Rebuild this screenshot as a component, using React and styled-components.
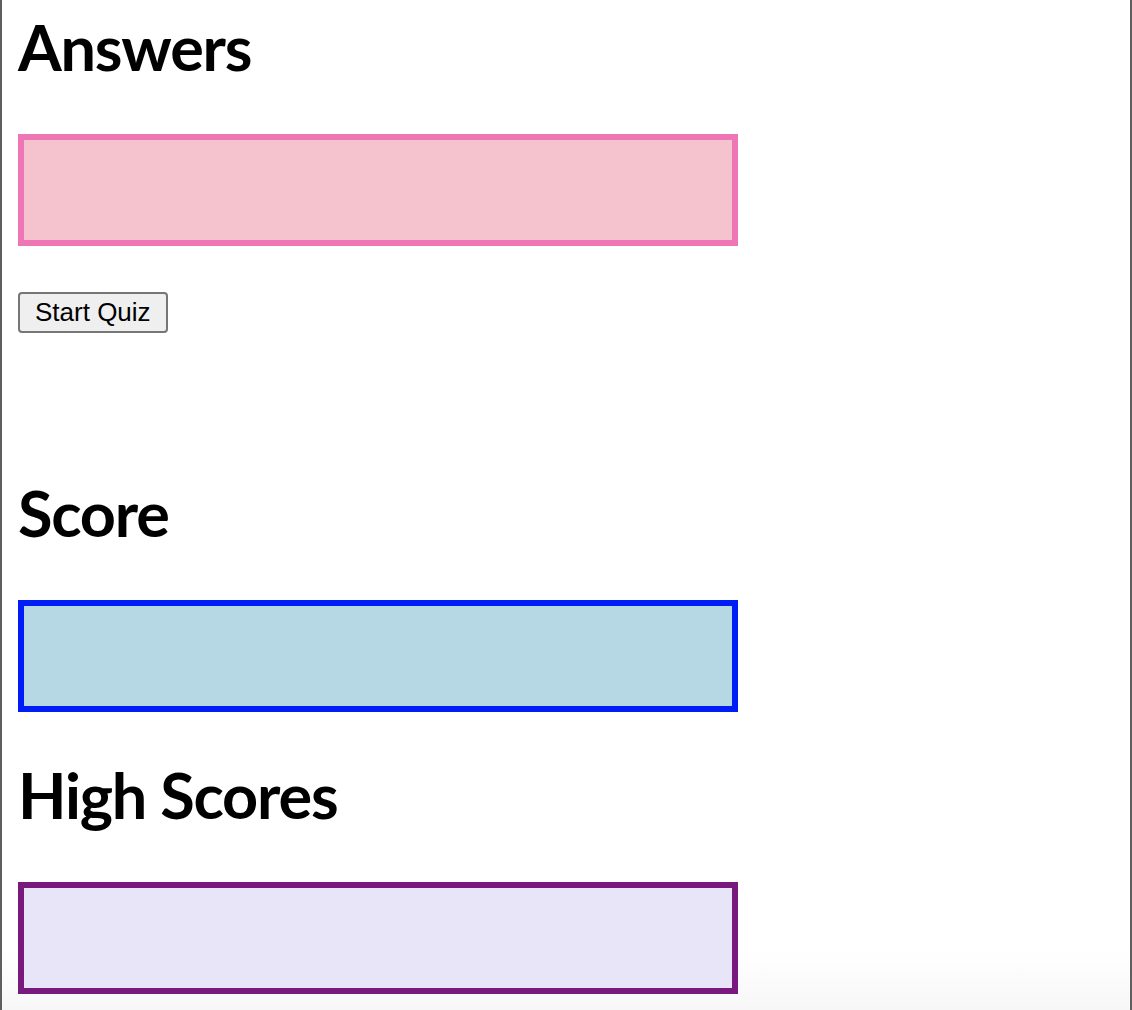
import React from 'react';
import styled, { createGlobalStyle } from 'styled-components';

const GlobalStyle = createGlobalStyle`
  html, body {
    margin: 0;
    padding: 0;
    background: #fff;
  }
  * {
    box-sizing: border-box;
  }
`;

const Page = styled.div`
  min-height: 100vh;
  width: 100%;
  border-left: 2px solid #5f5f5f;
  border-right: 2px solid #5f5f5f;
  padding: 8px 16px 16px;
  background: linear-gradient(to bottom, #fff 0, #fff 950px, #f7f7f7 1010px);
  font-family: Lato, "Open Sans", sans-serif;
`;

const Heading = styled.h1`
  margin: 0 0 49px;
  font-family: Lato, "Open Sans", sans-serif;
  font-weight: 700;
  font-size: 63px;
  line-height: 77px;
  letter-spacing: -1.2px;
  color: #000;
`;

const Panel = styled.div`
  width: 720px;
  height: 112px;
  border: 6px solid ${(p) => p.$border};
  background: ${(p) => p.$fill};
  margin-bottom: ${(p) => p.$gap}px;
`;

const Controls = styled.div`
  margin-bottom: 141px;
`;

const Button = styled.button`
  height: 41px;
  padding: 0 15px;
  border: 2px solid #767676;
  border-radius: 4px;
  background: #efefef;
  font-family: "Liberation Sans", Arial, sans-serif;
  font-size: 26px;
  color: #000;
  cursor: pointer;
`;

const App = () => {
  return (
    <Page>
      <GlobalStyle />
      <Heading>Answers</Heading>
      <Panel $border="#ee76b4" $fill="#f4c3cd" $gap={46} />
      <Controls>
        <Button type="button">Start Quiz</Button>
      </Controls>

      <Heading>Score</Heading>
      <Panel $border="#001cf7" $fill="#b6d8e4" $gap={44} />

      <Heading>High Scores</Heading>
      <Panel $border="#77197d" $fill="#e7e5f7" $gap={0} />
    </Page>
  );
};

export default App;
